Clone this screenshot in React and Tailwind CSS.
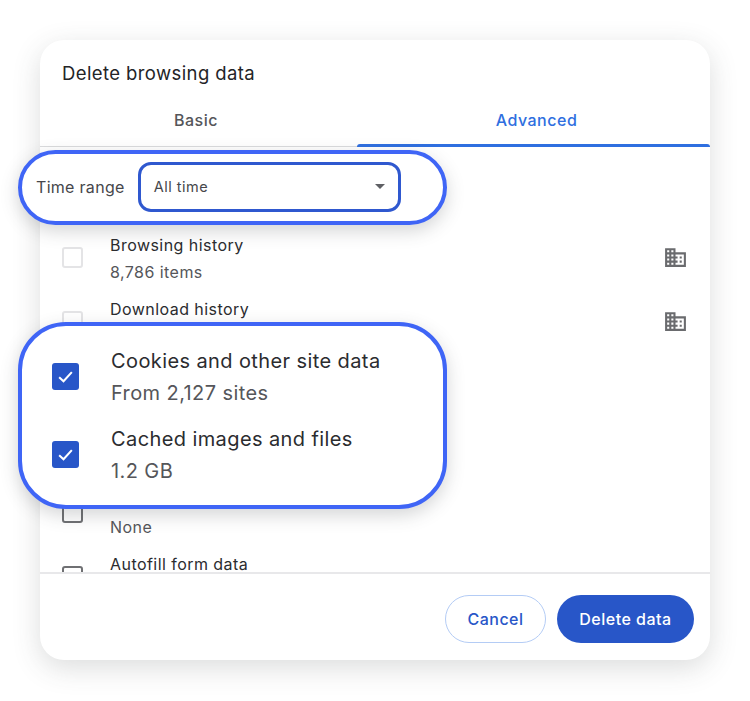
const font = { fontFamily: 'Inter, "Noto Sans", sans-serif' }

function DomainIcon() {
  return (
    <svg width="25" height="25" viewBox="0 0 24 24" fill="#6a6b6e" className="mt-[11px] shrink-0">
      <path d="M12 7V3H2v18h20V7H12zM6 19H4v-2h2v2zm0-4H4v-2h2v2zm0-4H4V9h2v2zm0-4H4V5h2v2zm4 12H8v-2h2v2zm0-4H8v-2h2v2zm0-4H8V9h2v2zm0-4H8V5h2v2zm10 12h-8v-2h2v-2h-2v-2h2v-2h-2V9h8v10zm-2-8h-2v2h2v-2zm0 4h-2v2h2v-2z" />
    </svg>
  )
}

// the callouts cover part of this list, so only what shows gets text
function Row({ title, sub, managed, light }) {
  return (
    <div className="flex h-16 shrink-0 items-start px-[22px] pt-[7px]">
      <span
        className={`mt-[13px] h-[21px] w-[21px] shrink-0 rounded-[3px] border-2 ${light ? 'border-[#e4e4e6]' : 'border-[#6f7073]'}`}
      />
      <div className="ml-[27px] flex-1 text-[16px] leading-[22px] tracking-[0.45px]">
        <p className="h-[22px] text-[#2b2c2f]">{title}</p>
        {sub && <p className="mt-[5px] text-[#55565a]">{sub}</p>}
      </div>
      {managed && <DomainIcon />}
    </div>
  )
}

function CheckedRow({ title, sub }) {
  return (
    <div className="flex h-[78px] items-center">
      <span className="flex h-[27px] w-[27px] shrink-0 items-center justify-center rounded-[3px] bg-[#2856c8]">
        <svg width="19" height="19" viewBox="0 0 24 24" fill="none" stroke="#fff" strokeWidth="2.6">
          <path d="M4 13l5.5 5L20 6.5" />
        </svg>
      </span>
      <div className="ml-8 text-[20px] leading-[28px] tracking-[0.4px]">
        <p className="text-[#2b2c2f]">{title}</p>
        <p className="mt-[4px] text-[#55565a]">{sub}</p>
      </div>
    </div>
  )
}

export default function App() {
  return (
    <div className="relative h-[701px] w-[750px] overflow-hidden bg-white" style={font}>
      <div className="pl-10 pt-10">
        <div className="flex h-[620px] w-[670px] flex-col overflow-hidden rounded-[24px] bg-white shadow-[0_8px_28px_rgba(60,64,67,0.18)]">
          <h1 className="pl-[22px] pt-[20px] text-[18.5px] leading-[26px] tracking-[0.4px] text-[#232427]">
            Delete browsing data
          </h1>

          <div className="mt-[14px] flex h-[47px] shrink-0 border-b border-[#dadbdd] text-[16px] font-medium tracking-[0.5px]">
            <div className="flex w-[317px] justify-center pr-[5px] pt-[8px] text-[#55565a]">Basic</div>
            <div className="relative flex flex-1 justify-center pl-[6px] pt-[8px] text-[#2f6fe0]">
              Advanced
              <span className="absolute inset-x-0 -bottom-px h-[3px] rounded-t-[3px] bg-[#2f6fe0]" />
            </div>
          </div>

          <div className="h-[425px] overflow-hidden pt-[80px]">
            <Row title="Browsing history" sub="8,786 items" managed light />
            <Row title="Download history" managed light />
            <div className="h-[127px]" />
            <Row sub="None" />
            <Row title="Autofill form data" />
          </div>

          <div className="flex flex-1 items-start justify-end gap-[11px] border-t-2 border-[#e8e8ea] pr-4 pt-[21px] text-[16px] font-medium tracking-[0.5px]">
            <button className="h-12 w-[101px] rounded-full border border-[#b4ccf5] bg-white text-[#2856c8]">
              Cancel
            </button>
            <button className="h-12 w-[137px] rounded-full bg-[#2856c8] text-white">Delete data</button>
          </div>
        </div>
      </div>

      {/* callouts sitting over the dialog */}
      <div className="absolute left-[18px] top-[150px] flex h-[75px] w-[429px] items-center rounded-[38px] border-[4px] border-[#3f65f6] bg-white pb-[2px] pl-[14px] shadow-[0_6px_18px_rgba(60,64,67,0.22)]">
        <span className="text-[16px] tracking-[0.3px] text-[#46474b]">Time range</span>
        <div className="ml-[13px] flex h-[50px] w-[263px] items-center justify-between rounded-[13px] border-[3px] border-[#2f58cf] pl-[13px] pr-[13px]">
          <span className="text-[14.5px] tracking-[0.5px] text-[#46474b]">All time</span>
          <span className="h-0 w-0 border-x-[5px] border-t-[5px] border-x-transparent border-t-[#5f6064]" />
        </div>
      </div>

      <div className="absolute left-[18px] top-[322px] flex h-[187px] w-[429px] flex-col justify-center rounded-[48px] border-[4px] border-[#3f65f6] bg-white pl-[30px] shadow-[0_6px_18px_rgba(60,64,67,0.22)]">
        <CheckedRow title="Cookies and other site data" sub="From 2,127 sites" />
        <CheckedRow title="Cached images and files" sub="1.2 GB" />
      </div>
    </div>
  )
}
